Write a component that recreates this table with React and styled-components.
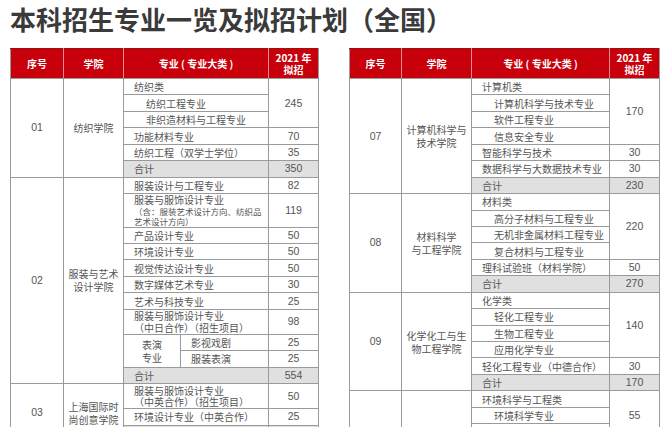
import React from 'react';
import styled, {createGlobalStyle} from "styled-components";

const GlobalStyle = createGlobalStyle`
  html, body {
    margin: 0;
    padding: 0;
    background: #FFFFFF;
    overflow: hidden;
  }
  body {
    font-family: "Noto Sans CJK SC", "Noto Sans", sans-serif;
  }
`;

const Page = styled.div`
  width: 669px;
  height: 427px;
  overflow: hidden;
  padding: 6px 0 0 10px;
  box-sizing: border-box;
`;

const Title = styled.h1`
  margin: 0 0 17px 0;
  font-size: 26px;
  line-height: 25px;
  font-weight: 700;
  color: #3a3a3a;
  letter-spacing: 0;
  white-space: nowrap;
`;

const Tables = styled.div`
  display: flex;
  align-items: flex-start;
  gap: 30px;
`;

const Table = styled.table`
  width: ${p => p.$width}px;
  border-collapse: collapse;
  table-layout: fixed;
  font-size: 10px;
  color: #555555;
`;

const HeadCell = styled.th`
  height: 29px;
  padding: 0;
  background: #c8000b;
  color: #FFFFFF;
  font-size: 10px;
  line-height: 12px;
  font-weight: 700;
  text-align: center;
  border: 1px solid #e58c8c;
  border-top-color: #9a1010;
  border-bottom-color: #9a9a9a;
  &:first-child {
    border-left-color: #9a9a9a;
  }
  &:last-child {
    border-right-color: #9a9a9a;
  }
`;

const Tr = styled.tr`
  height: ${p => p.$h || 16.45}px;
`;

const Cell = styled.td`
  padding: 0 0 0 ${p => p.$indent === "sub" ? 22 : p.$indent === "cat" ? 10 : 0}px;
  border: 1px solid #9a9a9a;
  text-align: ${p => p.$indent ? "left" : "center"};
  vertical-align: middle;
  line-height: ${p => p.$lh || 11}px;
  background: ${p => p.$gray ? "#e0e0e0" : "#FFFFFF"};
  white-space: nowrap;
  overflow: hidden;
`;

const Num = styled(Cell)`
  font-family: "Liberation Sans", Arial, sans-serif;
  font-size: 10.5px;
`;

const College = styled(Cell)`
  line-height: 13px;
`;

const Note = styled.span`
  display: block;
  font-size: 8.5px;
  line-height: 10px;
`;

function Head({wide}) {
  return (
    <thead>
      <tr>
        <HeadCell>序号</HeadCell>
        <HeadCell>学院</HeadCell>
        <HeadCell colSpan={wide ? 2 : 1}>专业 ( 专业大类 )</HeadCell>
        <HeadCell>2021 年<br/>拟招</HeadCell>
      </tr>
    </thead>
  );
}

function LeftTable() {
  const span = 2;
  return (
    <Table $width={308}>
      <colgroup>
        <col style={{width: 53}}/>
        <col style={{width: 60}}/>
        <col style={{width: 57}}/>
        <col style={{width: 88}}/>
        <col style={{width: 50}}/>
      </colgroup>
      <Head wide/>
      <tbody>
        <Tr>
          <Num rowSpan={6}>01</Num>
          <College rowSpan={6}>纺织学院</College>
          <Cell colSpan={span} $indent="cat">纺织类</Cell>
          <Num rowSpan={3}>245</Num>
        </Tr>
        <Tr><Cell colSpan={span} $indent="sub">纺织工程专业</Cell></Tr>
        <Tr><Cell colSpan={span} $indent="sub">非织造材料与工程专业</Cell></Tr>
        <Tr><Cell colSpan={span} $indent="cat">功能材料专业</Cell><Num>70</Num></Tr>
        <Tr><Cell colSpan={span} $indent="cat">纺织工程（双学士学位）</Cell><Num>35</Num></Tr>
        <Tr><Cell colSpan={span} $indent="cat" $gray>合计</Cell><Num $gray>350</Num></Tr>

        <Tr>
          <Num rowSpan={11}>02</Num>
          <College rowSpan={11}>服装与艺术<br/>设计学院</College>
          <Cell colSpan={span} $indent="cat">服装设计与工程专业</Cell>
          <Num>82</Num>
        </Tr>
        <Tr $h={33.5}>
          <Cell colSpan={span} $indent="cat" $lh={12}>
            服装与服饰设计专业
            <Note>（含：服装艺术设计方向、纺织品<br/>艺术设计方向）</Note>
          </Cell>
          <Num>119</Num>
        </Tr>
        <Tr><Cell colSpan={span} $indent="cat">产品设计专业</Cell><Num>50</Num></Tr>
        <Tr><Cell colSpan={span} $indent="cat">环境设计专业</Cell><Num>50</Num></Tr>
        <Tr><Cell colSpan={span} $indent="cat">视觉传达设计专业</Cell><Num>50</Num></Tr>
        <Tr><Cell colSpan={span} $indent="cat">数字媒体艺术专业</Cell><Num>30</Num></Tr>
        <Tr><Cell colSpan={span} $indent="cat">艺术与科技专业</Cell><Num>25</Num></Tr>
        <Tr $h={25}>
          <Cell colSpan={span} $indent="cat" $lh={11.5}>服装与服饰设计专业<br/>（中日合作）（招生项目）</Cell>
          <Num>98</Num>
        </Tr>
        <Tr>
          <College rowSpan={2} $lh={14}>表演<br/>专业</College>
          <Cell $indent="cat">影视戏剧</Cell>
          <Num>25</Num>
        </Tr>
        <Tr><Cell $indent="cat">服装表演</Cell><Num>25</Num></Tr>
        <Tr><Cell colSpan={span} $indent="cat" $gray>合计</Cell><Num $gray>554</Num></Tr>

        <Tr $h={25}>
          <Num rowSpan={3}>03</Num>
          <College rowSpan={3}>上海国际时<br/>尚创意学院</College>
          <Cell colSpan={span} $indent="cat" $lh={11.5}>服装与服饰设计专业<br/>（中英合作）（招生项目）</Cell>
          <Num>50</Num>
        </Tr>
        <Tr><Cell colSpan={span} $indent="cat">环境设计专业（中英合作）</Cell><Num>25</Num></Tr>
        <Tr><Cell colSpan={span} $indent="cat" $gray>合计</Cell><Num $gray>75</Num></Tr>
      </tbody>
    </Table>
  );
}

const rightGroups = [
  {
    no: "07",
    college: ["计算机科学与", "技术学院"],
    category: "计算机类",
    catNum: 170,
    subs: ["计算机科学与技术专业", "软件工程专业", "信息安全专业"],
    others: [["智能科学与技术", 30], ["数据科学与大数据技术专业", 30]],
    total: 230
  },
  {
    no: "08",
    college: ["材料科学", "与工程学院"],
    category: "材料类",
    catNum: 220,
    subs: ["高分子材料与工程专业", "无机非金属材料工程专业", "复合材料与工程专业"],
    others: [["理科试验班（材料学院）", 50]],
    total: 270
  },
  {
    no: "09",
    college: ["化学化工与生", "物工程学院"],
    category: "化学类",
    catNum: 140,
    subs: ["轻化工程专业", "生物工程专业", "应用化学专业"],
    others: [["轻化工程专业（中德合作）", 30]],
    total: 170
  },
  {
    no: "10",
    college: ["环境科学与", "工程学院"],
    category: "环境科学与工程类",
    catNum: 55,
    subs: ["环境科学专业", "环境工程专业"],
    others: [["给排水科学与工程专业", 30], ["资源循环科学与工程专业", 25], ["环境生态工程专业", 20]],
    total: 130
  }
];

function RightTable() {
  return (
    <Table $width={310}>
      <colgroup>
        <col style={{width: 52}}/>
        <col style={{width: 70}}/>
        <col style={{width: 138}}/>
        <col style={{width: 50}}/>
      </colgroup>
      <Head/>
      <tbody>
        {rightGroups.map(g => {
          const rows = 2 + g.subs.length + g.others.length;
          return (
            <React.Fragment key={g.no}>
              <Tr>
                <Num rowSpan={rows}>{g.no}</Num>
                <College rowSpan={rows}>{g.college[0]}<br/>{g.college[1]}</College>
                <Cell $indent="cat">{g.category}</Cell>
                <Num rowSpan={g.subs.length + 1}>{g.catNum}</Num>
              </Tr>
              {g.subs.map(s => (
                <Tr key={s}><Cell $indent="sub">{s}</Cell></Tr>
              ))}
              {g.others.map(([name, n]) => (
                <Tr key={name}><Cell $indent="cat">{name}</Cell><Num>{n}</Num></Tr>
              ))}
              <Tr><Cell $indent="cat" $gray>合计</Cell><Num $gray>{g.total}</Num></Tr>
            </React.Fragment>
          );
        })}
      </tbody>
    </Table>
  );
}

export default function App() {
  return (
    <Page>
      <GlobalStyle/>
      <Title>本科招生专业一览及拟招计划（全国）</Title>
      <Tables>
        <LeftTable/>
        <RightTable/>
      </Tables>
    </Page>
  );
}
